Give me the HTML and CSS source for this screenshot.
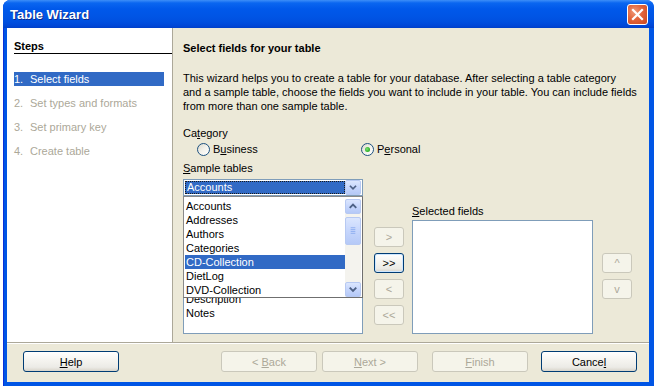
FILE: index.html
```html
<!DOCTYPE html>
<html>
<head>
<meta charset="utf-8">
<title>Table Wizard</title>
<link rel="stylesheet" href="styles.css">
</head>
<body>
<div class="desk">
  <div class="window">
    <div class="titlebar">
      <span class="title">Table Wizard</span>
      <div class="close">
        <svg width="19" height="19" viewBox="0 0 19 19"><path d="M5 5 L14 14 M14 5 L5 14" stroke="#fff" stroke-width="2.2" stroke-linecap="square" fill="none"/></svg>
      </div>
    </div>
    <div class="client">
      <div class="main">
        <div class="steps">
          <div class="steps-head">Steps</div>
          <div class="step active first"><span class="n">1.</span><span>Select fields</span></div>
          <div class="step"><span class="n">2.</span><span>Set types and formats</span></div>
          <div class="step"><span class="n">3.</span><span>Set primary key</span></div>
          <div class="step"><span class="n">4.</span><span>Create table</span></div>
        </div>
        <div class="content">
          <div class="heading">Select fields for your table</div>
          <div class="intro">This wizard helps you to create a table for your database. After selecting a table category<br>and a sample table, choose the fields you want to include in your table. You can include fields<br>from more than one sample table.</div>
          <div class="lbl cat">Ca<u>t</u>egory</div>
          <div class="radios">
            <div class="radio-opt first"><span class="radio"></span><span>B<u>u</u>siness</span></div>
            <div class="radio-opt"><span class="radio checked"></span><span>P<u>e</u>rsonal</span></div>
          </div>
          <div class="lbl sample"><u>S</u>ample tables</div>
          <div class="combo">
            <div class="combo-field">Accounts</div>
            <div class="xpbtn combo-btn">
              <svg width="16" height="15" viewBox="0 0 16 15"><path d="M4.5 5.5 L8 9 L11.5 5.5" stroke="#4d6185" stroke-width="2" fill="none"/></svg>
            </div>
          </div>
          <div class="lower">
            <div class="col-fields">
              <div class="lbl"><u>F</u>ields</div>
              <div class="list">
                <div class="item">AccountID</div>
                <div class="item">AccountNumber</div>
                <div class="item">AccountName</div>
                <div class="item">AccountTypeID</div>
                <div class="item">AccountType</div>
                <div class="item">Description</div>
                <div class="item">Notes</div>
              </div>
            </div>
            <div class="col-move">
              <div class="btn small disabled"><span>&gt;</span></div>
              <div class="btn small focus"><span>&gt;&gt;</span></div>
              <div class="btn small disabled"><span>&lt;</span></div>
              <div class="btn small disabled"><span>&lt;&lt;</span></div>
            </div>
            <div class="col-sel">
              <div class="lbl"><u>S</u>elected fields</div>
              <div class="list sel"></div>
            </div>
            <div class="col-order">
              <div class="btn small disabled"><span>^</span></div>
              <div class="btn small disabled"><span>v</span></div>
            </div>
          </div>
          <div class="popup">
            <div class="popup-items">
              <div class="item">Accounts</div>
              <div class="item">Addresses</div>
              <div class="item">Authors</div>
              <div class="item">Categories</div>
              <div class="item hl">CD-Collection</div>
              <div class="item">DietLog</div>
              <div class="item">DVD-Collection</div>
            </div>
            <div class="scrollbar">
              <div class="xpbtn sb-btn">
                <svg width="15" height="15" viewBox="0 0 15 15"><path d="M4 9 L7.5 5.5 L11 9" stroke="#4d6185" stroke-width="2" fill="none"/></svg>
              </div>
              <div class="xpbtn sb-thumb">
                <svg width="15" height="28" viewBox="0 0 15 28"><path d="M5 10.5 H10 M5 12.5 H10 M5 14.5 H10 M5 16.5 H10" stroke="#8eaef0" stroke-width="1" fill="none"/></svg>
              </div>
              <div class="sb-space"></div>
              <div class="xpbtn sb-btn">
                <svg width="15" height="15" viewBox="0 0 15 15"><path d="M4 5.5 L7.5 9 L11 5.5" stroke="#4d6185" stroke-width="2" fill="none"/></svg>
              </div>
            </div>
          </div>
        </div>
      </div>
      <div class="footer">
        <div class="btn big"><span><u>H</u>elp</span></div>
        <div class="btn big disabled back"><span>&lt; <u>B</u>ack</span></div>
        <div class="btn big disabled next"><span><u>N</u>ext &gt;</span></div>
        <div class="btn big disabled finish"><span><u>F</u>inish</span></div>
        <div class="btn big cancel"><span>Cance<u>l</u></span></div>
      </div>
    </div>
  </div>
</div>
</body>
</html>
```
FILE: styles.css
```css
* { box-sizing: border-box; }
body {
  margin: 0;
  background: #ffffff;
  font-family: "Liberation Sans", Arial, sans-serif;
  font-size: 11px;
  color: #000;
  overflow: hidden;
}
.desk {
  width: 654px;
  height: 386px;
  padding-left: 3px;
}
.window {
  width: 651px;
  height: 386px;
  background: #0055e5;
  border-radius: 8px 8px 0 0;
  display: flex;
  flex-direction: column;
  box-shadow: inset 1px 0 0 #0831d9;
}
.titlebar {
  height: 28px;
  flex: none;
  display: flex;
  align-items: center;
  justify-content: space-between;
  padding: 0 6px 0 7px;
  border-radius: 7px 7px 0 0;
  background: linear-gradient(#3d8ef8 0, #0a66f0 3px, #0058ea 9px, #0055e5 16px, #004fdf 22px, #0046d6 26px, #003fc8 28px);
}
.title {
  font-weight: bold;
  font-size: 13px;
  color: #fff;
  text-shadow: 1px 1px 0 #0c2d8c;
  margin-top: 1px;
}
.close {
  width: 21px;
  height: 21px;
  border: 1px solid #fff;
  border-radius: 3px;
  background: radial-gradient(circle at 35% 35%, #f09a7a 0, #e2643b 45%, #c9461f 100%);
  display: flex;
  align-items: center;
  justify-content: center;
  margin-top: 1px;
}
.client {
  margin: 0 5px 4px 4px;
  flex: 1;
  background: #ece9d8;
  display: flex;
  flex-direction: column;
}
.main {
  height: 314px;
  flex: none;
  display: flex;
}
.steps {
  width: 165px;
  flex: none;
  background: #fff;
  padding: 12px 0 0 7px;
}
.steps-head {
  font-weight: bold;
  line-height: 13px;
  border-bottom: 1px solid #000;
}
.step {
  display: flex;
  width: 150px;
  height: 14px;
  line-height: 14px;
  margin-top: 10px;
  color: #aca899;
}
.step.first { margin-top: 18px; }
.step .n { width: 16px; flex: none; }
.step.active {
  background: #316ac5;
  color: #fff;
}
.content {
  flex: 1;
  border-left: 1px solid #aca899;
  padding: 13px 0 0 10px;
  position: relative;
}
.heading {
  font-weight: bold;
  line-height: 14px;
}
.intro {
  margin-top: 16px;
  line-height: 14px;
  width: 462px;
  white-space: nowrap;
}
.lbl { line-height: 14px; }
.cat { margin-top: 13px; }
.radios {
  display: flex;
  margin-top: 2px;
  padding-left: 14px;
  height: 14px;
  align-items: center;
}
.radio-opt {
  display: flex;
  align-items: center;
  gap: 3px;
}
.radio-opt.first { width: 164px; }
.radio {
  width: 13px;
  height: 13px;
  border-radius: 50%;
  border: 1px solid #1c5180;
  background: linear-gradient(135deg, #dcd9cc 0, #f3f2ec 50%, #ffffff 100%);
  display: flex;
  align-items: center;
  justify-content: center;
}
.radio.checked::after {
  content: "";
  width: 5px;
  height: 5px;
  border-radius: 50%;
  background: radial-gradient(circle at 40% 40%, #7fe07a 0, #31b52c 60%, #1d8b1d 100%);
}
.sample { margin-top: 5px; }
.combo {
  margin-top: 4px;
  width: 180px;
  height: 17px;
  border: 1px solid #7f9db9;
  background: #fff;
  display: flex;
}
.combo-field {
  width: 160px;
  height: 13px;
  margin: 1px 0 1px 1px;
  background: #316ac5;
  color: #fff;
  line-height: 11px;
  padding-left: 1px;
  border: 1px dotted #1a1a1a;
}
.xpbtn {
  background: linear-gradient(#dbe6fe 0, #c6d6fc 50%, #b5c9f7 100%);
  border: 1px solid #b7c9f2;
  border-radius: 2px;
  display: flex;
  align-items: center;
  justify-content: center;
}
.combo-btn {
  width: 16px;
  height: 15px;
}
.lower {
  margin-top: 8px;
  display: flex;
}
.col-fields { width: 180px; flex: none; }
.list {
  margin-top: 2px;
  height: 114px;
  border: 1px solid #7f9db9;
  background: #fff;
  padding: 1px 0 0 2px;
}
.item {
  height: 14px;
  line-height: 14px;
  white-space: nowrap;
}
.col-move {
  margin-left: 11px;
  width: 30px;
  flex: none;
  padding-top: 23px;
  display: flex;
  flex-direction: column;
  gap: 6px;
}
.col-sel { margin-left: 8px; width: 181px; flex: none; }
.col-order {
  margin-left: 9px;
  width: 30px;
  flex: none;
  padding-top: 49px;
  display: flex;
  flex-direction: column;
  gap: 6px;
}
.btn {
  border: 1px solid #003c74;
  border-radius: 3px;
  background: linear-gradient(#ffffff 0, #f6f5f1 40%, #ecebe6 80%, #d8d4ca 100%);
  display: flex;
  align-items: center;
  justify-content: center;
  color: #000;
  white-space: pre;
}
.btn.small { height: 20px; }
.btn.focus {
  box-shadow: inset 0 0 0 1px #cee7ff;
}
.btn.disabled {
  border-color: #cac8bb;
  background: #f5f4ea;
  color: #aca899;
}
.popup {
  position: absolute;
  left: 10px;
  top: 168px;
  width: 180px;
  height: 102px;
  border: 1px solid #8a8a8a;
  border-right-color: #6f6f6f;
  border-bottom-color: #6f6f6f;
  background: #fff;
  padding: 2px 1px 0 1px;
  display: flex;
}
.popup-items { width: 160px; flex: none; }
.popup .item { padding-left: 1px; }
.popup .item.hl { background: #316ac5; color: #fff; }
.scrollbar {
  width: 16px;
  height: 98px;
  flex: none;
  background: #f4f3ee;
  display: flex;
  flex-direction: column;
}
.sb-btn { height: 15px; flex: none; }
.sb-thumb { height: 28px; margin-top: 3px; flex: none; }
.sb-space { flex: 1; }
.footer {
  flex: 1;
  border-top: 1px solid #aca899;
  box-shadow: inset 0 1px 0 #fff;
  display: flex;
  padding: 8px 12px 0 16px;
  align-items: flex-start;
}
.btn.big { width: 96px; height: 21px; }
.back { margin-left: auto; }
.next { margin-left: 5px; }
.finish { margin-left: 14px; }
.cancel { margin-left: 13px; }
```
